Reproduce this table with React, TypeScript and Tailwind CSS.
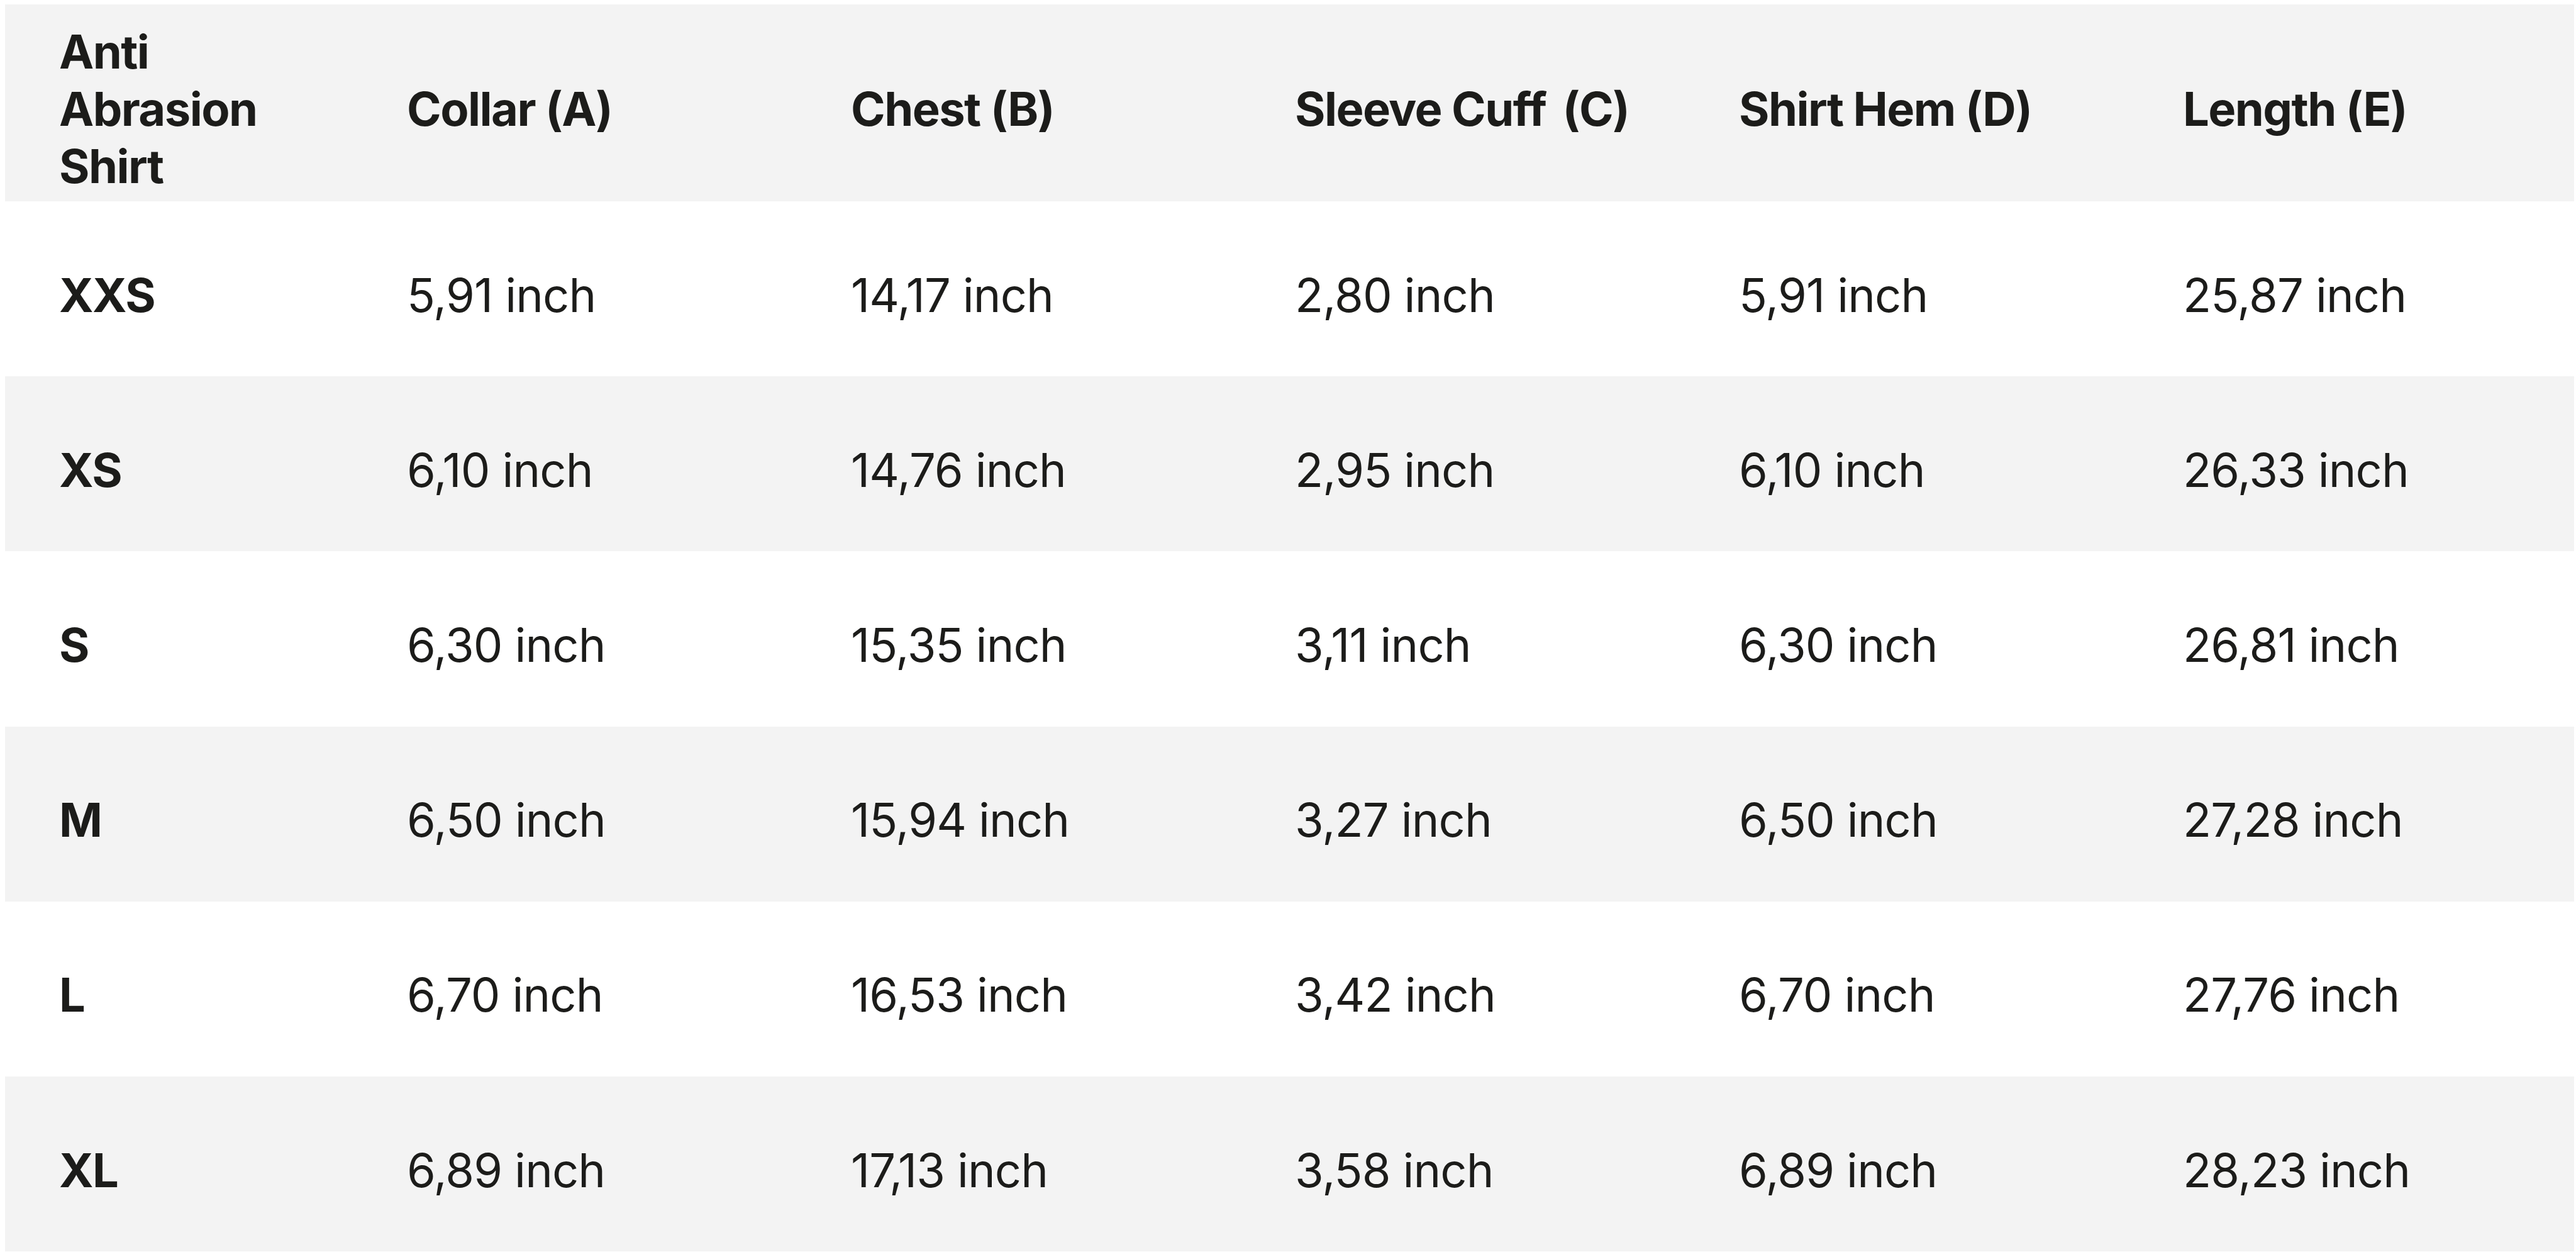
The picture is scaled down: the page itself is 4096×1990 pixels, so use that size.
import React from "react";

const headers = ["Collar (A)", "Chest (B)", "Sleeve Cuff\u2009 (C)", "Shirt Hem (D)", "Length (E)"];

const rows: string[][] = [
  ["XXS", "5,91 inch", "14,17 inch", "2,80 inch", "5,91 inch", "25,87 inch"],
  ["XS", "6,10 inch", "14,76 inch", "2,95 inch", "6,10 inch", "26,33 inch"],
  ["S", "6,30 inch", "15,35 inch", "3,11 inch", "6,30 inch", "26,81 inch"],
  ["M", "6,50 inch", "15,94 inch", "3,27 inch", "6,50 inch", "27,28 inch"],
  ["L", "6,70 inch", "16,53 inch", "3,42 inch", "6,70 inch", "27,76 inch"],
  ["XL", "6,89 inch", "17,13 inch", "3,58 inch", "6,89 inch", "28,23 inch"],
];

export default function App() {
  return (
    <div className="min-h-screen bg-white pl-[8px] pt-[7px] font-['Inter','Noto_Sans',sans-serif] text-[74px] leading-[91px] text-[#1c1c1a]">
      <div className="w-[4085px]">
        <div className="grid h-[313px] grid-cols-[555px_706px_706px_706px_706px_706px] bg-[#f3f3f3] font-bold tracking-[-0.021em]">
          <div className="flex flex-col justify-center pl-[86px] pt-[20px]">
            <span>Anti</span>
            <span>Abrasion</span>
            <span>Shirt</span>
          </div>
          {headers.map((h) => (
            <div key={h} className="flex items-center whitespace-pre pl-[84px] pt-[20px]">
              {h}
            </div>
          ))}
        </div>
        {rows.map((r, i) => (
          <div
            key={r[0]}
            className={`grid h-[278.2px] grid-cols-[555px_706px_706px_706px_706px_706px] ${
              i % 2 === 1 ? "bg-[#f3f3f3]" : "bg-white"
            }`}
          >
            {r.map((c, j) => (
              <div
                key={j}
                className={`flex items-center whitespace-nowrap pt-[20px] ${
                  j === 0
                    ? "pl-[86px] font-bold tracking-[-0.021em]"
                    : "pl-[84px] font-normal tracking-[-0.012em]"
                }`}
              >
                {c}
              </div>
            ))}
          </div>
        ))}
      </div>
    </div>
  );
}
